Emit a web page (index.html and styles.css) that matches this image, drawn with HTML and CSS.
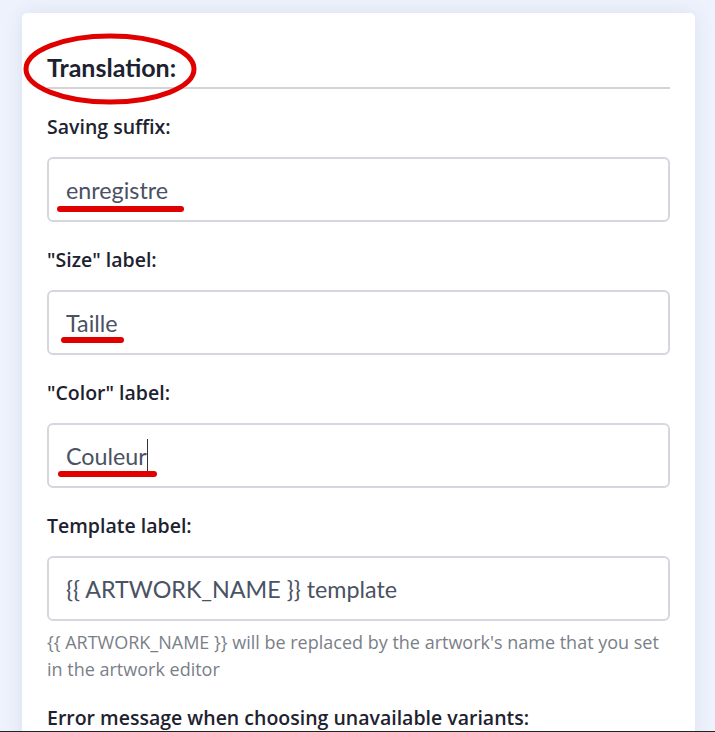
FILE: index.html
```html
<!DOCTYPE html>
<html lang="en">
<head>
<meta charset="utf-8">
<title>Translation</title>
<link rel="stylesheet" href="styles.css">
</head>
<body>
<div class="card">
  <div class="heading">
    <h2 class="title">Translation:</h2>
    <svg class="ellipse" width="180" height="74" viewBox="0 0 180 74"><ellipse cx="88" cy="37" rx="84" ry="33" fill="none" stroke="#e00000" stroke-width="5"/></svg>
  </div>
  <div class="group">
    <div class="label">Saving suffix:</div>
    <div class="field"><span class="val">enregistre</span><span class="mark m1"></span></div>
  </div>
  <div class="group">
    <div class="label">"Size" label:</div>
    <div class="field"><span class="val">Taille</span><span class="mark m2"></span></div>
  </div>
  <div class="group">
    <div class="label">"Color" label:</div>
    <div class="field"><span class="val">Couleur</span><span class="caret"></span><span class="mark m3"></span></div>
  </div>
  <div class="group">
    <div class="label">Template label:</div>
    <div class="field"><span class="val">{{ ARTWORK_NAME }} template</span></div>
    <div class="help">{{ ARTWORK_NAME }} will be replaced by the artwork's name that you set in the artwork editor</div>
  </div>
  <div class="group last">
    <div class="label">Error message when choosing unavailable variants:</div>
  </div>
</div>
<div class="edge"></div>
</body>
</html>
```
FILE: styles.css
```css
html, body { margin: 0; height: 100%; overflow: hidden; }
body {
  background: #eef2fc;
  font-family: "Lato", "Open Sans", sans-serif;
  padding: 13px 20px 0 22px;
  box-sizing: border-box;
}
.card {
  background: #fff;
  border-radius: 5px 5px 0 0;
  box-shadow: 0 0 18px rgba(60, 80, 160, 0.10);
  padding: 0 25px 0 25px;
  min-height: 800px;
}
.heading {
  position: relative;
  padding-top: 35px;
  border-bottom: 2px solid #d4d4d4;
}
.title {
  margin: 0;
  font-size: 25px;
  font-weight: 700;
  color: #1e2230;
  line-height: 39px;
}
.ellipse { position: absolute; left: -25px; top: 19px; }
.group { padding-top: 24px; }
.group.last { padding-top: 21px; }
.label {
  font-family: "Open Sans", "Lato", sans-serif;
  font-size: 19.5px;
  font-weight: 600;
  color: #1e2230;
  line-height: 28px;
  margin-bottom: 16px;
}
.field {
  position: relative;
  height: 61px;
  border: 2px solid #d4d8de;
  border-radius: 6px;
  padding: 0 17px;
  display: flex;
  align-items: center;
  font-size: 23.3px;
  color: #4a5263;
}
.val { line-height: 1; padding-top: 3px; }
.mark {
  position: absolute;
  height: 6px;
  background: #e00000;
  border-radius: 3px;
}
.m1 { left: 8px; width: 127px; top: 47px; }
.m2 { left: 12px; width: 63px; top: 45px; }
.m3 { left: 9px; width: 99px; top: 46px; }
.caret { width: 1px; height: 33px; background: #333; margin-left: 0; align-self: center; }
.help {
  margin-top: 8px;
  font-family: "Open Sans", "Lato", sans-serif;
  font-size: 18px;
  line-height: 27px;
  color: #7a7f88;
}
.edge { position: fixed; left: 0; right: 0; bottom: 0; height: 1px; background: #222; }
```
